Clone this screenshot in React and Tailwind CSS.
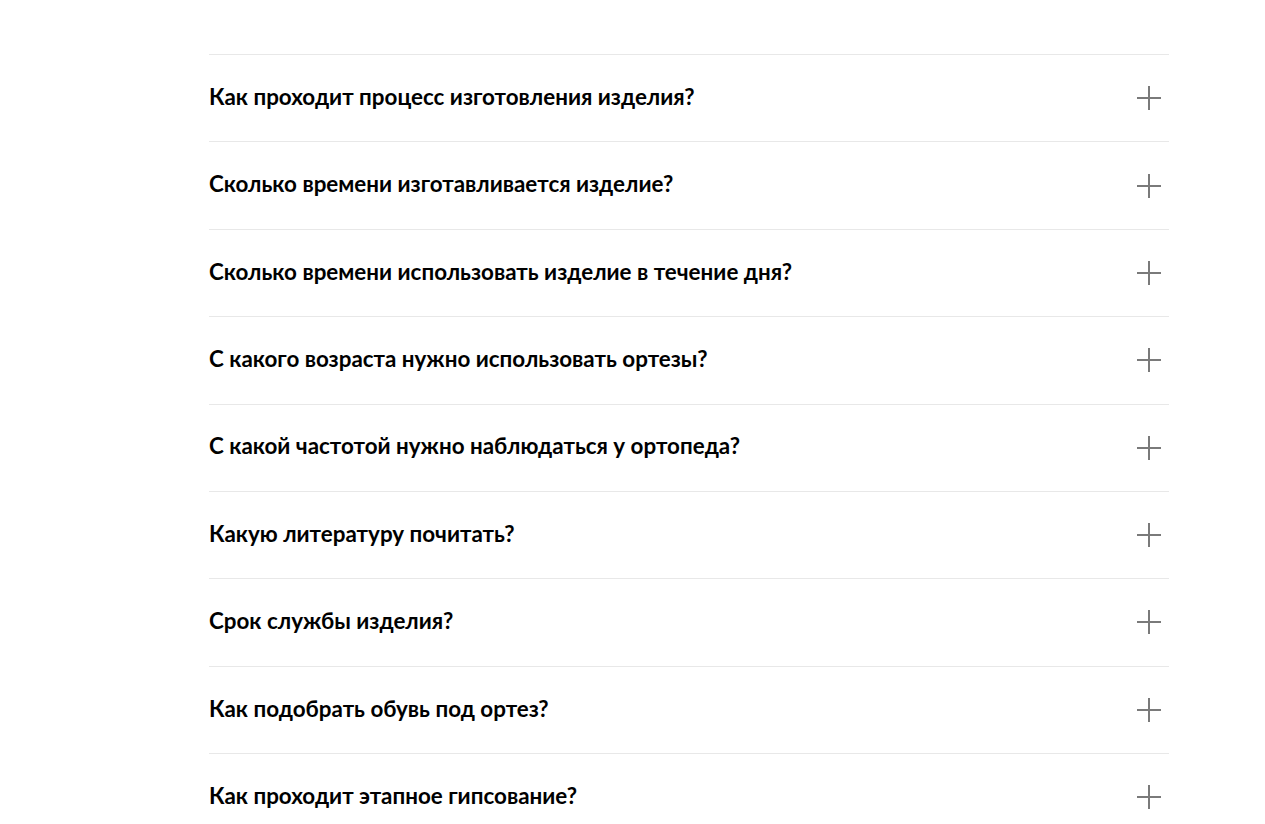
const questions = [
  'Как проходит процесс изготовления изделия?',
  'Сколько времени изготавливается изделие?',
  'Сколько времени использовать изделие в течение дня?',
  'С какого возраста нужно использовать ортезы?',
  'С какой частотой нужно наблюдаться у ортопеда?',
  'Какую литературу почитать?',
  'Срок службы изделия?',
  'Как подобрать обувь под ортез?',
  'Как проходит этапное гипсование?',
]

function PlusIcon() {
  return (
    <svg width="24" height="24" viewBox="0 0 24 24" className="shrink-0">
      <path d="M12 0v24M0 12h24" stroke="#7a7a7a" strokeWidth="2" />
    </svg>
  )
}

export default function App() {
  return (
    <div className="min-h-screen bg-white pt-[54px]" style={{ fontFamily: 'Lato, "Noto Sans", sans-serif' }}>
      <div className="ml-[209px] w-[960px]">
        {questions.map((q) => (
          <div
            key={q}
            className="flex h-[87.375px] items-center justify-between border-t border-[#e8e8e8] pr-[8px]"
          >
            <span className="pb-[3px] text-[22.4px] font-bold text-black">{q}</span>
            <PlusIcon />
          </div>
        ))}
      </div>
    </div>
  )
}
